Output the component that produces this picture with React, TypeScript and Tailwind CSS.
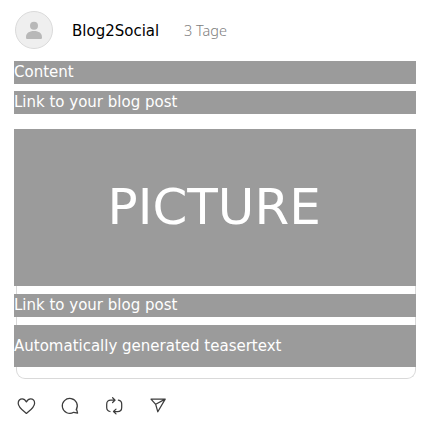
import type { ReactNode } from "react";

function Bar({ children, className }: { children: ReactNode; className: string }) {
  return (
    <div className={`relative flex w-[402px] items-center bg-[#9b9b9b] text-[15px] leading-[23px] whitespace-nowrap text-white ${className}`}>
      {children}
    </div>
  );
}

function Icon({ children }: { children: ReactNode }) {
  return (
    <svg className="h-5 w-5" viewBox="0 0 20 20" fill="none" stroke="#3c3c3c" strokeWidth="1.25" strokeLinecap="round" strokeLinejoin="round">
      {children}
    </svg>
  );
}

export default function App() {
  return (
    <main className="h-[436px] w-[436px] overflow-hidden bg-white pl-[14px] font-['DejaVu_Sans',sans-serif]">
      <header className="flex h-[61px] items-center">
        <svg className="mb-[2px] ml-px h-[38px] w-[38px]" viewBox="0 0 38 38">
          <circle cx="19" cy="19" r="18.5" fill="#efefef" stroke="#dadada" />
          <circle cx="19" cy="14.7" r="4" fill="#b8b8b8" />
          <path d="M11 26.4c0-4.1 3.1-6.3 8-6.3s8 2.2 8 6.3c0 1-.5 1.6-1.6 1.6H12.6c-1.1 0-1.6-.6-1.6-1.6Z" fill="#b8b8b8" />
        </svg>
        <span className="ml-[19px] w-[112px] pt-[2px] text-[15px] text-black">Blog2Social</span>
        <span className="font-['Noto_Sans',sans-serif] text-[14.5px] font-light text-[#808080]">3 Tage</span>
      </header>
      <Bar className="h-[23px]">Content</Bar>
      <Bar className="mt-[7px] h-[23px]">Link to your blog post</Bar>
      <Bar className="mt-[15px] h-[157px]">
        <span className="mb-[2px] ml-[93.5px] text-[50px] leading-none">PICTURE</span>
      </Bar>
      <section className="ml-[2px] h-[93px] w-[400px] rounded-b-[9px] border border-t-0 border-[#d9d9d9] pt-2">
        <div className="-ml-[3px]">
          <Bar className="h-[23px]">Link to your blog post</Bar>
          <Bar className="mt-2 h-[42px]">Automatically generated teasertext</Bar>
        </div>
      </section>
      <footer className="mt-[17px] ml-[2px] flex gap-6">
        <Icon>
          <path d="M10.4 17.4C7 14.6 2.2 11.4 2.2 7.2c0-2.6 1.8-4.4 4-4.4 1.8 0 3.1 1 4.2 3.1 1.1-2.1 2.4-3.1 4.2-3.1 2.2 0 4 1.8 4 4.4 0 4.2-4.8 7.4-8.2 10.2Z" />
        </Icon>
        <Icon>
          <path d="M16.2 13.8a7.5 7.5 0 1 0-2.5 2.5l3.9.9-1-3.8Z" />
        </Icon>
        <Icon>
          <path d="M6 15.5c-2.2-.4-3.3-1.9-3.3-4V8.2c0-2.6 1.5-4.1 4.1-4.1h4M8.6 1.7l2.5 2.4-2.5 2.4M14.4 4.1c2.1.4 3.3 1.9 3.3 4v3.3c0 2.6-1.5 4.1-4.1 4.1h-4M12 13.1l-2.5 2.4 2.5 2.4" />
        </Icon>
        <Icon>
          <path d="m3 3.2 14.2-.1-7.4 12.7-2.1-7.5L3 3.2Zm4.7 5.1 9.5-5.2" />
        </Icon>
      </footer>
    </main>
  );
}
